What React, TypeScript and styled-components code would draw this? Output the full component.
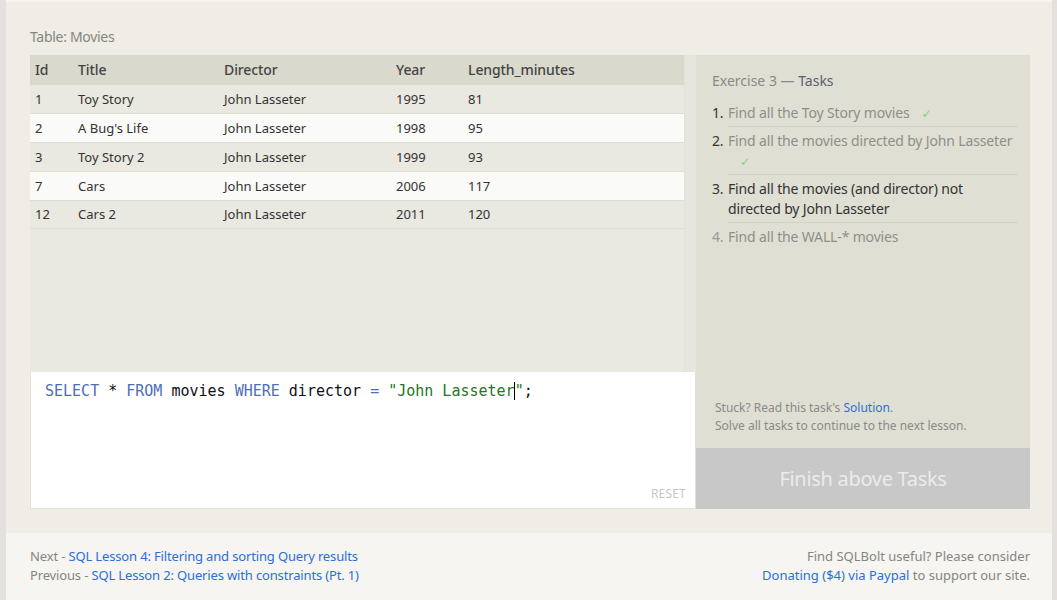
import React from "react";
import styled, { createGlobalStyle } from "styled-components";

const Global = createGlobalStyle`
  html, body { margin: 0; padding: 0; background: #e3e0dd; }
  body { font-family: "Noto Sans", "DejaVu Sans", sans-serif; }
  * { box-sizing: border-box; }
`;

const Page = styled.div`
  width: 1046px;
  margin-left: 6px;
  padding-top: 2px;
  background: #f6f5f2;
`;

const Main = styled.div`
  background: #efede6;
  padding: 26px 22px 24px 24px;
`;

const Caption = styled.div`
  font-size: 14px;
  letter-spacing: -0.3px;
  color: #858580;
  height: 27px;
  line-height: 18px;
`;

const Workspace = styled.div`
  display: flex;
  width: 1000px;
  height: 454px;
`;

const Left = styled.div`
  width: 666px;
  display: flex;
  flex-direction: column;
`;

const TableWrap = styled.div`
  flex: 1;
  display: flex;
  background: #e9e8e1;
`;

const TableArea = styled.div`
  flex: 1;
`;

const Scroll = styled.div`
  width: 12px;
  background: #e6e5de;
  border-left: 1px solid #e1e0d9;
`;

const Table = styled.table`
  width: 100%;
  border-collapse: collapse;
  font-size: 13px;
  color: #333;
`;

const Th = styled.th<{ $w?: number }>`
  text-align: left;
  background: #dad9cd;
  font-weight: 500;
  font-size: 14px;
  letter-spacing: -0.1px;
  color: #444;
  height: 30px;
  padding: 0 5px 2px;
  width: ${(p) => (p.$w ? `${p.$w}px` : "auto")};
`;

const Tr = styled.tr<{ $alt: boolean }>`
  background: ${(p) => (p.$alt ? "#fafaf8" : "#e9e8e1")};
  border-bottom: 1px solid #dedcd4;
`;

const Td = styled.td`
  height: 28.75px;
  padding: 0 5px;
`;

const Editor = styled.div`
  height: 137px;
  background: #fff;
  border: 1px solid #e2e0d8;
  border-top: none;
  position: relative;
  padding: 10px 14px;
  font-family: "DejaVu Sans Mono", monospace;
  font-size: 15px;
  color: #111;
`;

const Kw = styled.span`
  color: #4d6fb8;
`;
const Str = styled.span`
  color: #217821;
`;
const Caret = styled.span`
  border-left: 1px solid #000;
  margin-left: -1px;
`;

const Reset = styled.div`
  position: absolute;
  right: 9px;
  bottom: 6px;
  font-family: "Noto Sans", sans-serif;
  font-size: 12px;
  letter-spacing: 0.2px;
  color: #c8c8c8;
`;

const Right = styled.div`
  width: 334px;
  display: flex;
  flex-direction: column;
  background: #e0dfd4;
`;

const Tasks = styled.div`
  flex: 1;
  padding: 17px 12px 13px 16px;
  display: flex;
  flex-direction: column;
`;

const TasksTitle = styled.div`
  font-size: 14px;
  line-height: 18px;
  color: #8a8a86;
  margin-bottom: 9px;
  b { font-weight: 400; color: #5a6070; }
`;

const List = styled.ol`
  margin: 0;
  padding: 0;
  list-style: none;
  font-size: 14px;
  line-height: 20px;
  letter-spacing: -0.15px;
`;

const Item = styled.li<{ $state: "done" | "active" | "todo"; $last?: boolean }>`
  display: flex;
  padding: 4px 0 0;
  color: ${(p) => (p.$state === "active" ? "#333" : "#8f8f89")};
  span.n {
    width: 16px;
    flex: none;
    color: ${(p) => (p.$state === "todo" ? "#9a9a94" : "#333")};
  }
  div.t {
    flex: 1;
    padding-bottom: 3px;
    border-bottom: ${(p) => (p.$last ? "none" : "1px solid #d3d2c7")};
  }
`;

const Check = styled.span`
  color: #7fce8a;
  font-size: 12px;
  line-height: 1;
  margin-left: 12px;
`;

const Spacer = styled.div`
  flex: 1;
`;

const Hint = styled.div`
  font-size: 12px;
  line-height: 18px;
  color: #8a8a86;
  padding-left: 3px;
`;

const Link = styled.a`
  color: #2b6fd8;
  text-decoration: none;
`;

const Finish = styled.div`
  height: 61px;
  background: #c8c8c8;
  color: #ebebeb;
  font-size: 20px;
  letter-spacing: -0.3px;
  display: flex;
  align-items: center;
  justify-content: center;
`;

const Footer = styled.div`
  display: flex;
  justify-content: space-between;
  padding: 14px 22px 21px 24px;
  font-size: 13px;
  line-height: 19px;
  letter-spacing: -0.15px;
  color: #858580;
`;

const FootRight = styled.div`
  text-align: right;
  letter-spacing: 0;
`;

const rows = [
  [1, "Toy Story", "John Lasseter", 1995, 81],
  [2, "A Bug's Life", "John Lasseter", 1998, 95],
  [3, "Toy Story 2", "John Lasseter", 1999, 93],
  [7, "Cars", "John Lasseter", 2006, 117],
  [12, "Cars 2", "John Lasseter", 2011, 120],
];

export default function App() {
  return (
    <>
      <Global />
      <Page>
        <Main>
          <Caption>Table: Movies</Caption>
          <Workspace>
            <Left>
              <TableWrap>
                <TableArea>
                  <Table>
                    <thead>
                      <tr>
                        <Th $w={43}>Id</Th>
                        <Th $w={146}>Title</Th>
                        <Th $w={172}>Director</Th>
                        <Th $w={72}>Year</Th>
                        <Th>Length_minutes</Th>
                      </tr>
                    </thead>
                    <tbody>
                      {rows.map((r, i) => (
                        <Tr key={i} $alt={i % 2 === 1}>
                          {r.map((c, j) => (
                            <Td key={j}>{c}</Td>
                          ))}
                        </Tr>
                      ))}
                    </tbody>
                  </Table>
                </TableArea>
                <Scroll />
              </TableWrap>
              <Editor>
                <Kw>SELECT</Kw> * <Kw>FROM</Kw> movies <Kw>WHERE</Kw> director <Kw>=</Kw>{" "}
                <Str>"John Lasseter</Str>
                <Caret />
                <Str>"</Str>;
                <Reset>RESET</Reset>
              </Editor>
            </Left>
            <Right>
              <Tasks>
                <TasksTitle>
                  Exercise 3 — <b>Tasks</b>
                </TasksTitle>
                <List>
                  <Item $state="done">
                    <span className="n">1.</span>
                    <div className="t">
                      Find all the Toy Story movies<Check>✓</Check>
                    </div>
                  </Item>
                  <Item $state="done">
                    <span className="n">2.</span>
                    <div className="t">
                      Find all the movies directed by John Lasseter
                      <br />
                      <Check>✓</Check>
                    </div>
                  </Item>
                  <Item $state="active">
                    <span className="n">3.</span>
                    <div className="t">Find all the movies (and director) not directed by John Lasseter</div>
                  </Item>
                  <Item $state="todo" $last>
                    <span className="n">4.</span>
                    <div className="t">Find all the WALL-* movies</div>
                  </Item>
                </List>
                <Spacer />
                <Hint>
                  Stuck? Read this task's <Link href="#">Solution</Link>.
                  <br />
                  Solve all tasks to continue to the next lesson.
                </Hint>
              </Tasks>
              <Finish>Finish above Tasks</Finish>
            </Right>
          </Workspace>
        </Main>
        <Footer>
          <div>
            Next - <Link href="#">SQL Lesson 4: Filtering and sorting Query results</Link>
            <br />
            Previous - <Link href="#">SQL Lesson 2: Queries with constraints (Pt. 1)</Link>
          </div>
          <FootRight>
            Find SQLBolt useful? Please consider
            <br />
            <Link href="#">Donating ($4) via Paypal</Link> to support our site.
          </FootRight>
        </Footer>
      </Page>
    </>
  );
}
